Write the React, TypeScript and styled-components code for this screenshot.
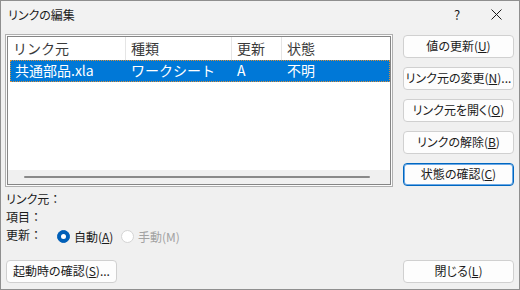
import React from "react";
import styled, { createGlobalStyle } from "styled-components";

const Global = createGlobalStyle`
  html, body { margin: 0; padding: 0; background: #f0f0f0; }
  * { box-sizing: border-box; }
`;

const UI = `"Noto Sans CJK JP", "Noto Sans", sans-serif`;

const Window = styled.div`
  width: 520px;
  height: 290px;
  border: 1px solid #8f8f8f;
  background: #f0f0f0;
  display: flex;
  flex-direction: column;
  font-family: ${UI};
  font-feature-settings: "palt";
  color: #1b1b1b;
  overflow: hidden;
`;

const TitleBar = styled.div`
  height: 29px;
  flex: none;
  display: flex;
  align-items: center;
  padding-left: 7px;
  background: #f2f2f2;
`;

const Title = styled.div`
  font-size: 12px;
  flex: 1;
  margin-top: -3px;
`;

const TitleButton = styled.div<{ $w: number }>`
  width: ${(p) => p.$w}px;
  height: 29px;
  display: flex;
  align-items: center;
  justify-content: center;
  font-size: 13px;
  margin-top: -3px;
`;

const Body = styled.div`
  flex: 1;
  display: flex;
  flex-direction: column;
  padding: 4px 5px 6px 4px;
`;

const TopRow = styled.div`
  display: flex;
  justify-content: space-between;
`;

const ListFrame = styled.div`
  width: 388px;
  height: 153px;
  border: 1px solid #b0b0b0;
  padding: 1px;
  background: #fbfbfb;
`;

const ListInner = styled.div`
  height: 100%;
  border: 1px solid #858585;
  display: flex;
  flex-direction: column;
  background: #ffffff;
  font-feature-settings: normal;
`;

const HeaderRow = styled.div`
  height: 23px;
  display: flex;
  flex: none;
`;

const HeaderCell = styled.div<{ $w?: number }>`
  ${(p) => (p.$w ? `width: ${p.$w}px;` : "flex: 1;")}
  border-right: 1px solid #e5e5e5;
  padding-left: 5px;
  font-size: 14px;
  line-height: 22px;
  color: #3a3a3a;
  &:last-child { border-right: none; }
`;

const DataArea = styled.div`
  flex: 1;
  padding-left: 2px;
`;

const DataRow = styled.div<{ $selected?: boolean }>`
  height: 22px;
  display: flex;
  background: ${(p) => (p.$selected ? "#0078d7" : "transparent")};
  color: ${(p) => (p.$selected ? "#ffffff" : "#1b1b1b")};
  outline: ${(p) => (p.$selected ? "1px dotted #d9903a" : "none")};
  outline-offset: -1px;
`;

const DataCell = styled.div<{ $w?: number }>`
  ${(p) => (p.$w ? `width: ${p.$w}px;` : "flex: 1;")}
  padding-left: 5px;
  font-size: 14px;
  line-height: 21px;
  white-space: nowrap;
  overflow: hidden;
`;

const HScroll = styled.div`
  height: 14px;
  flex: none;
  background: #f0f0f0;
  display: flex;
  align-items: center;
  padding: 0 20px 0 16px;
`;

const Thumb = styled.div`
  flex: 1;
  height: 2px;
  background: #8a8a8a;
  border-radius: 1px;
`;

const ButtonColumn = styled.div`
  width: 111px;
  display: flex;
  flex-direction: column;
  gap: 9px;
  padding-top: 1px;
`;

const Button = styled.button<{ $focused?: boolean; $w?: number }>`
  height: 23px;
  width: ${(p) => (p.$w ? `${p.$w}px` : "100%")};
  background: #fdfdfd;
  border: 1px solid ${(p) => (p.$focused ? "#0067c0" : "#d0d0d0")};
  box-shadow: ${(p) => (p.$focused ? "inset 0 0 0 1px #6aa8e6" : "none")};
  border-radius: 4px;
  font-family: ${UI};
  font-feature-settings: "palt";
  font-size: 12px;
  color: #1b1b1b;
  padding: 0 0 2px;
  white-space: nowrap;
`;

const Info = styled.div`
  display: flex;
  flex-direction: column;
  padding-left: 1px;
  margin-top: 2px;
`;

const InfoLine = styled.div`
  height: 18px;
  display: flex;
  align-items: center;
  font-size: 12px;
`;

const Colon = styled.span`
  font-feature-settings: normal;
`;

const Label = styled.span`
  width: 51px;
`;

const Radio = styled.span<{ $checked?: boolean }>`
  width: 13px;
  height: 13px;
  border-radius: 50%;
  flex: none;
  margin-top: 4px;
  background: ${(p) => (p.$checked ? "#005fb8" : "#ffffff")};
  border: 1px solid ${(p) => (p.$checked ? "#005fb8" : "#d4d4d4")};
  display: flex;
  align-items: center;
  justify-content: center;
  &::after {
    content: "";
    width: 5px;
    height: 5px;
    border-radius: 50%;
    background: ${(p) => (p.$checked ? "#ffffff" : "transparent")};
  }
`;

const RadioLabel = styled.span<{ $disabled?: boolean }>`
  margin: 4px 0 0 4px;
  color: ${(p) => (p.$disabled ? "#a2a2a2" : "#1b1b1b")};
  width: ${(p) => (p.$disabled ? "auto" : "47px")};
`;

const Footer = styled.div`
  margin-top: auto;
  display: flex;
  justify-content: space-between;
  padding-left: 1px;
`;

const CloseIcon = () => (
  <svg width="11" height="11" viewBox="0 0 11 11">
    <path d="M0.5 0.5 L10.5 10.5 M10.5 0.5 L0.5 10.5" stroke="#1b1b1b" strokeWidth="1" />
  </svg>
);

export default function App() {
  return (
    <>
      <Global />
      <Window>
        <TitleBar>
          <Title>リンクの編集</Title>
          <TitleButton $w={32}>?</TitleButton>
          <TitleButton $w={46}>
            <CloseIcon />
          </TitleButton>
        </TitleBar>
        <Body>
          <TopRow>
            <ListFrame>
              <ListInner>
                <HeaderRow>
                  <HeaderCell $w={118}>リンク元</HeaderCell>
                  <HeaderCell $w={106}>種類</HeaderCell>
                  <HeaderCell $w={50}>更新</HeaderCell>
                  <HeaderCell>状態</HeaderCell>
                </HeaderRow>
                <DataArea>
                  <DataRow $selected>
                    <DataCell $w={116}>共通部品.xla</DataCell>
                    <DataCell $w={106}>ワークシート</DataCell>
                    <DataCell $w={50}>A</DataCell>
                    <DataCell>不明</DataCell>
                  </DataRow>
                </DataArea>
                <HScroll>
                  <Thumb />
                </HScroll>
              </ListInner>
            </ListFrame>
            <ButtonColumn>
              <Button>値の更新(<u>U</u>)</Button>
              <Button>リンク元の変更(<u>N</u>)...</Button>
              <Button>リンク元を開く(<u>O</u>)</Button>
              <Button>リンクの解除(<u>B</u>)</Button>
              <Button $focused>状態の確認(<u>C</u>)</Button>
            </ButtonColumn>
          </TopRow>
          <Info>
            <InfoLine>リンク元<Colon>：</Colon></InfoLine>
            <InfoLine>項目<Colon>：</Colon></InfoLine>
            <InfoLine>
              <Label>更新<Colon>：</Colon></Label>
              <Radio $checked />
              <RadioLabel>自動(<u>A</u>)</RadioLabel>
              <Radio />
              <RadioLabel $disabled>手動(M)</RadioLabel>
            </InfoLine>
          </Info>
          <Footer>
            <Button $w={111}>起動時の確認(<u>S</u>)...</Button>
            <Button $w={111}>閉じる(<u>L</u>)</Button>
          </Footer>
        </Body>
      </Window>
    </>
  );
}
